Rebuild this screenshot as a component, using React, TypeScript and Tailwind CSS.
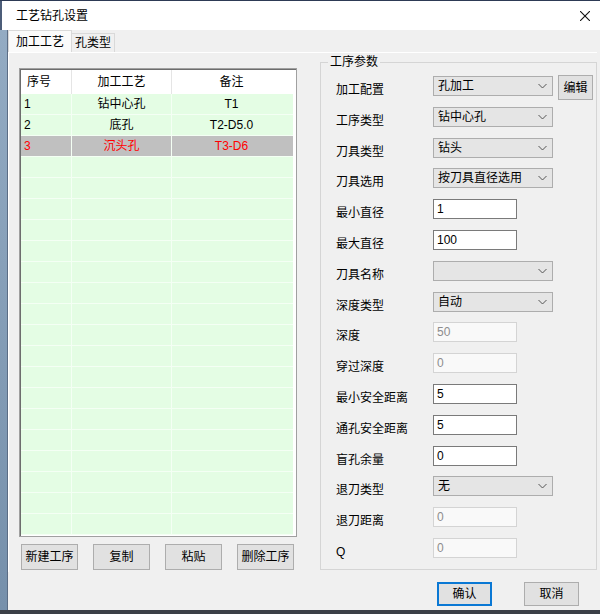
import React from 'react';

type Param = {
  label: string;
  kind: 'combo' | 'field';
  value: string;
  disabled?: boolean;
  edit?: boolean;
};

const params: Param[] = [
  { label: '加工配置', kind: 'combo', value: '孔加工', edit: true },
  { label: '工序类型', kind: 'combo', value: '钻中心孔' },
  { label: '刀具类型', kind: 'combo', value: '钻头' },
  { label: '刀具选用', kind: 'combo', value: '按刀具直径选用' },
  { label: '最小直径', kind: 'field', value: '1' },
  { label: '最大直径', kind: 'field', value: '100' },
  { label: '刀具名称', kind: 'combo', value: '' },
  { label: '深度类型', kind: 'combo', value: '自动' },
  { label: '深度', kind: 'field', value: '50', disabled: true },
  { label: '穿过深度', kind: 'field', value: '0', disabled: true },
  { label: '最小安全距离', kind: 'field', value: '5' },
  { label: '通孔安全距离', kind: 'field', value: '5' },
  { label: '盲孔余量', kind: 'field', value: '0' },
  { label: '退刀类型', kind: 'combo', value: '无' },
  { label: '退刀距离', kind: 'field', value: '0', disabled: true },
  { label: 'Q', kind: 'field', value: '0', disabled: true },
];

const rows = [
  { no: '1', step: '钻中心孔', note: 'T1', selected: false },
  { no: '2', step: '底孔', note: 'T2-D5.0', selected: false },
  { no: '3', step: '沉头孔', note: 'T3-D6', selected: true },
];

const Chevron = () => (
  <svg width="9" height="6" viewBox="0 0 9 6" fill="none">
    <path d="M0.5 1 L4.5 5 L8.5 1" stroke="#555" strokeWidth="1" />
  </svg>
);

const Combo = ({ value }: { value: string }) => (
  <div className="flex h-[20px] w-[120px] items-center justify-between border border-[#adadad] bg-[#e5e5e5] pl-[4px] pr-[5px] leading-[16px]">
    <span>{value}</span>
    <Chevron />
  </div>
);

const Field = ({ value, disabled }: { value: string; disabled?: boolean }) => (
  <div
    className={`flex h-[20px] w-[84px] items-center pl-[3px] leading-[16px] ${
      disabled ? 'border border-[#d4d4d4] bg-[#f9f9f9] text-[#8d8d8d]' : 'border border-[#7a7a7a] bg-white text-black'
    }`}
  >
    {value}
  </div>
);

const Button = ({ children, className = '' }: { children: React.ReactNode; className?: string }) => (
  <div className={`flex items-center justify-center bg-[#e1e1e1] leading-[16px] ${className}`}>{children}</div>
);

export default function App() {
  const emptyRows = Array.from({ length: 18 });

  return (
    <div className="flex h-[614px] w-[600px] flex-col overflow-hidden bg-[#3b3f47] font-['Liberation_Sans','Noto_Sans_CJK_SC',sans-serif] text-[12px] text-black">
      <div className="h-px bg-[#2d3a55]" />
      {/* title bar */}
      <div className="flex h-[29px] items-center justify-between border-l-2 border-[#4c5d79] bg-white pl-[14px] pr-[10px]">
        <span className="leading-[16px]">工艺钻孔设置</span>
        <svg width="10" height="10" viewBox="0 0 10 10">
          <path d="M0 0 L10 10 M10 0 L0 10" stroke="#111" strokeWidth="1.1" />
        </svg>
      </div>

      <div className="flex h-[580px]">
        <div className="w-[8px] border-r border-[#5b6d85] bg-gradient-to-b from-[#93abc3] to-[#7690ab]" />
        <div className="flex w-[592px] flex-col bg-[#f0f0f0]">
          {/* tabs */}
          <div className="flex h-[22px] items-end">
            <div className="flex h-[22px] w-[64px] items-center justify-center border border-b-0 border-[#d9d9d9] bg-[#fafafa] leading-[16px]">
              加工工艺
            </div>
            <div className="flex h-[19px] w-[43px] items-center justify-center border border-b-0 border-l-0 border-[#d9d9d9] bg-[#f0f0f0] leading-[16px]">
              孔类型
            </div>
          </div>

          {/* tab panel */}
          <div className="flex h-[520px] w-[589px] border-l border-t border-white">
            <div className="flex flex-col pl-[10px] pt-[15px]">
              <div className="flex h-[469px] w-[278px] flex-col border border-[#a0a0a0]">
                <div className="flex h-full flex-col border-l border-t border-[#6d6d6d] bg-white pr-[3px]">
                  <div className="flex h-[24px] bg-white">
                    <div className="flex w-[51px] items-center border-r border-[#e5e5e5] pl-[6px]">序号</div>
                    <div className="flex w-[100px] items-center justify-center border-r border-[#e5e5e5]">加工工艺</div>
                    <div className="flex w-[119px] items-center justify-center">备注</div>
                  </div>
                  {rows.map(r => (
                    <div
                      key={r.no}
                      className={`flex h-[21px] border-b border-[#f4fff4] ${
                        r.selected ? 'bg-[#c0c0c0] text-[#ff0000]' : 'bg-[#e4fde4] text-black'
                      }`}
                    >
                      <div className="flex w-[51px] items-center border-r border-[#f4fff4] pl-[3px]">{r.no}</div>
                      <div className="flex w-[100px] items-center justify-center border-r border-[#f4fff4]">{r.step}</div>
                      <div className="flex w-[119px] items-center justify-center">{r.note}</div>
                    </div>
                  ))}
                  {emptyRows.map((_, i) => (
                    <div key={i} className="flex h-[21px] border-b border-[#f4fff4] bg-[#e4fde4]">
                      <div className="w-[51px] border-r border-[#f4fff4]" />
                      <div className="w-[100px] border-r border-[#f4fff4]" />
                      <div className="w-[119px]" />
                    </div>
                  ))}
                </div>
              </div>
              <div className="mt-[7px] flex gap-[15px] pl-[2px]">
                <Button className="h-[26px] w-[57px] border border-[#adadad]">新建工序</Button>
                <Button className="h-[26px] w-[57px] border border-[#adadad]">复制</Button>
                <Button className="h-[26px] w-[57px] border border-[#adadad]">粘贴</Button>
                <Button className="h-[26px] w-[57px] border border-[#adadad]">删除工序</Button>
              </div>
            </div>

            {/* parameter group */}
            <div className="relative ml-[23px] mt-[9px] h-[508px] w-[277px] border border-[#d5d5d5] pl-[15px] pt-[13px]">
              <span className="absolute -top-[9px] left-[7px] bg-[#f0f0f0] px-[2px] leading-[16px]">工序参数</span>
              {params.map(p => (
                <div key={p.label} className="flex h-[30.8px] items-start">
                  <div className="w-[97px] pt-[6px] leading-[16px]">{p.label}</div>
                  {p.kind === 'combo' ? <Combo value={p.value} /> : <Field value={p.value} disabled={p.disabled} />}
                  {p.edit && (
                    <Button className="-mt-[1px] ml-[5px] h-[25px] w-[35px] border border-[#adadad]">编辑</Button>
                  )}
                </div>
              ))}
            </div>
          </div>

          {/* footer */}
          <div className="flex gap-[32px] pl-[429px] pt-[10px]">
            <Button className="h-[24px] w-[55px] border-2 border-[#0a78d4]">确认</Button>
            <Button className="h-[24px] w-[55px] border border-[#adadad]">取消</Button>
          </div>
        </div>
      </div>
      <div className="h-[4px] bg-[#3b3f47]" />
    </div>
  );
}
